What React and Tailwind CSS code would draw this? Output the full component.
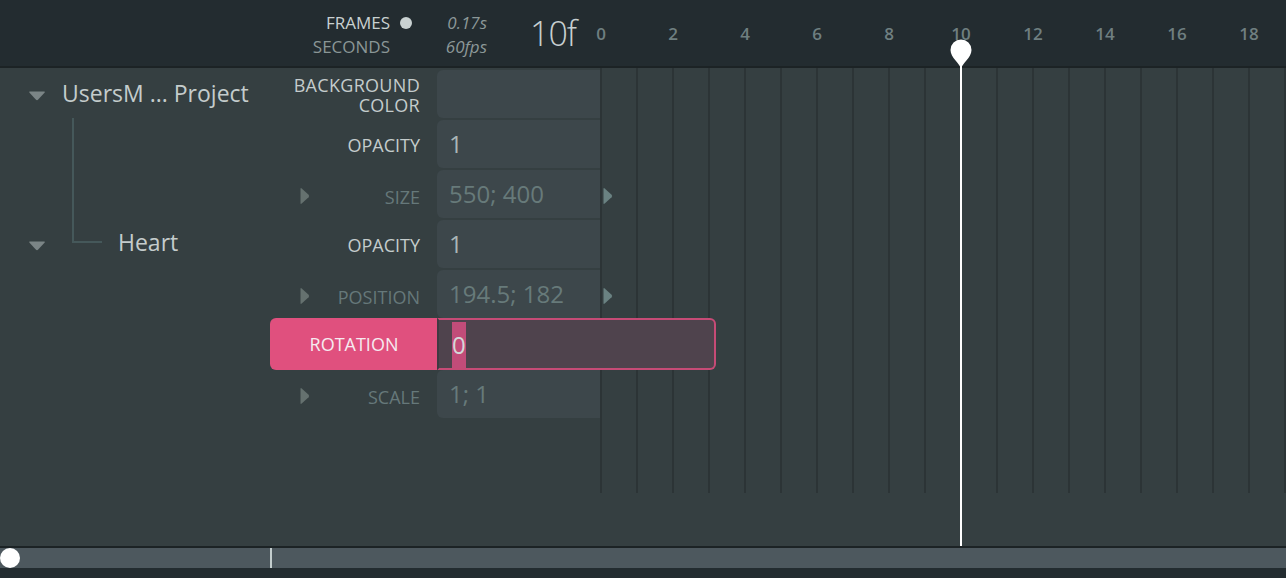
import React from "react";

const FONT = { fontFamily: '"Open Sans", "Noto Sans", sans-serif' };

function TriDown({ className = "" }) {
  return (
    <svg width="18" height="11" viewBox="0 0 18 11" className={className}>
      <path d="M2 1.5 H16 Q17.5 1.5 16.5 2.7 L10.2 9.6 Q9 10.8 7.8 9.6 L1.5 2.7 Q0.5 1.5 2 1.5 Z" fill="#7b8586" />
    </svg>
  );
}

function TriRight({ color = "#65716f", className = "" }) {
  return (
    <svg width="11" height="18" viewBox="0 0 11 18" className={className}>
      <path d="M1.5 2 V16 Q1.5 17.5 2.7 16.5 L9.6 10.2 Q10.8 9 9.6 7.8 L2.7 1.5 Q1.5 0.5 1.5 2 Z" fill={color} />
    </svg>
  );
}

function PropRow({ label, value, active, expandable, arrow, twoLine }) {
  return (
    <div className="h-[50px] pt-[2px] flex shrink-0">
      {twoLine ? (
        <div className="w-[167px] shrink-0 h-[48px] flex flex-col items-end justify-center pr-[17px] text-[18px] uppercase leading-[20px] tracking-[0.3px] text-[#c4cccc] pt-[2px]">
          <span>BACKGROUND</span>
          <span>COLOR</span>
        </div>
      ) : (
        <div className="w-[167px] shrink-0 h-[48px] flex items-center pl-[29px]">
          <div className="w-[11px] shrink-0 flex items-center pt-[4px]">{expandable && <TriRight />}</div>
          <div
            className={
              "flex-1 text-right pr-[17px] text-[18px] uppercase whitespace-nowrap leading-[20px] " +
              (expandable ? "pt-[5px] " : "pt-[1px] ") +
              (active ? "text-[#c4cccc]" : "text-[#66787a]")
            }
          >
            {label}
          </div>
        </div>
      )}
      <div className="w-[163px] shrink-0 h-[48px] rounded-l-[6px] bg-[#3d474b] pl-[12px] flex items-center text-[24px] leading-none">
        <span className={active ? "text-[#aab6b6]" : "text-[#677a7a]"}>{value}</span>
      </div>
      {arrow && (
        <div className="h-[48px] shrink-0 flex items-center pl-[2px] pt-[4px]">
          <TriRight color="#6a8282" />
        </div>
      )}
    </div>
  );
}

export default function App() {
  const frames = Array.from({ length: 20 }, (_, i) => i);
  const ruler = [0, 2, 4, 6, 8, 10, 12, 14, 16, 18];
  return (
    <div className="relative w-[1286px] h-[578px] overflow-hidden bg-[#353f41] flex flex-col" style={FONT}>
      {/* header */}
      <div className="h-[68px] shrink-0 bg-[#232c30] border-b-2 border-[#1c2325] flex pt-[11px] overflow-hidden">
        <div className="w-[390px] shrink-0 flex flex-col items-end text-[17px] leading-[24px]">
          <span className="text-[#c9d1d1]">FRAMES</span>
          <span className="text-[#8a9696]">SECONDS</span>
        </div>
        <div className="w-[22px] shrink-0 pl-[10px] pt-[6px]">
          <div className="w-[12px] h-[12px] rounded-full bg-[#c9d1d1]" />
        </div>
        <div className="w-[75px] shrink-0 flex flex-col items-end italic text-[17px] leading-[24px] text-[#8c9898]">
          <span>0.17s</span>
          <span>60fps</span>
        </div>
        <div className="ml-[43px] w-[71px] shrink-0 text-[34px] font-light leading-[44px] text-[#c8d0d0] tracking-[-1px]">10f</div>
        <div className="h-[46px] shrink-0 flex items-center">
          {ruler.map((n) => (
            <div key={n} className="w-[72px] shrink-0 flex">
              <div className="w-0 flex justify-center">
                <span className="text-[17px] font-semibold text-[#6f7f80] whitespace-nowrap">{n}</span>
              </div>
            </div>
          ))}
        </div>
      </div>

      {/* main */}
      <div className="flex flex-1 min-h-0">
        {/* tree */}
        <div className="w-[270px] shrink-0 flex flex-col">
          <div className="h-[50px] flex items-center pl-[28px]">
            <TriDown className="mt-[5px] shrink-0" />
            <span className="ml-[16px] text-[23px] text-[#c4cccc] whitespace-nowrap">UsersM ... Project</span>
          </div>
          <div className="h-[99px] pl-[72px]">
            <div className="w-[2px] h-full bg-[#45585a]" />
          </div>
          <div className="h-[50px] flex items-center pl-[28px]">
            <TriDown className="mt-[7px] shrink-0" />
            <div className="self-start ml-[26px] w-[30px] h-[26px] shrink-0 border-l-2 border-b-2 border-[#45585a]" />
            <span className="ml-[16px] text-[23px] text-[#c4cccc]">Heart</span>
          </div>
        </div>

        {/* properties */}
        <div className="w-[330px] shrink-0 flex flex-col relative z-10">
          <PropRow twoLine value="" active />
          <PropRow label="OPACITY" value="1" active />
          <PropRow label="SIZE" value="550; 400" expandable arrow />
          <PropRow label="OPACITY" value="1" active />
          <PropRow label="POSITION" value="194.5; 182" expandable arrow />
          <div className="h-[50px] shrink-0">
            <div className="flex h-[52px] w-[446px]">
              <div className="w-[167px] shrink-0 h-full rounded-l-[6px] bg-[#e0507e] flex items-center justify-center pl-[1px] text-[18px] text-[#f6eaf0] pt-[1px]">
                ROTATION
              </div>
              <div className="flex-1 h-full rounded-r-[6px] border-2 border-l-2 border-[#c64b76] border-l-[#3f3a42] bg-[#4f434d] flex">
                <div className="ml-[13px] mt-[2px] w-[14px] h-[46px] bg-[#c24c79] flex items-center text-[24px] leading-none text-[#d4d8d8]">
                  0
                </div>
              </div>
            </div>
          </div>
          <PropRow label="SCALE" value="1; 1" expandable />
        </div>

        {/* timeline grid */}
        <div className="flex-1 flex overflow-hidden">
          {frames.map((f) => (
            <div key={f} className="w-[36px] h-[425px] shrink-0 border-l-2 border-[#2c3436]" />
          ))}
        </div>
      </div>

      {/* bottom scrubber */}
      <div className="h-[22px] shrink-0 border-t-2 border-[#1c2325] bg-[#4d585e] relative">
        <div className="absolute left-0 top-0 w-[20px] h-[20px] rounded-full bg-white" />
        <div className="absolute left-[270px] top-0 w-[2px] h-[20px] bg-[#c3cdcd]" />
      </div>
      <div className="h-[10px] shrink-0 bg-[#232c30]" />

      {/* playhead */}
      <div className="absolute left-[960px] top-[60px] w-[2px] h-[486px] bg-white" />
      <svg className="absolute left-[950px] top-[39px]" width="22" height="30" viewBox="0 0 22 30">
        <path d="M11 30 C10 24 0.5 19 0.5 11 A10.5 10.5 0 1 1 21.5 11 C21.5 19 12 24 11 30 Z" fill="#ffffff" />
      </svg>
    </div>
  );
}
